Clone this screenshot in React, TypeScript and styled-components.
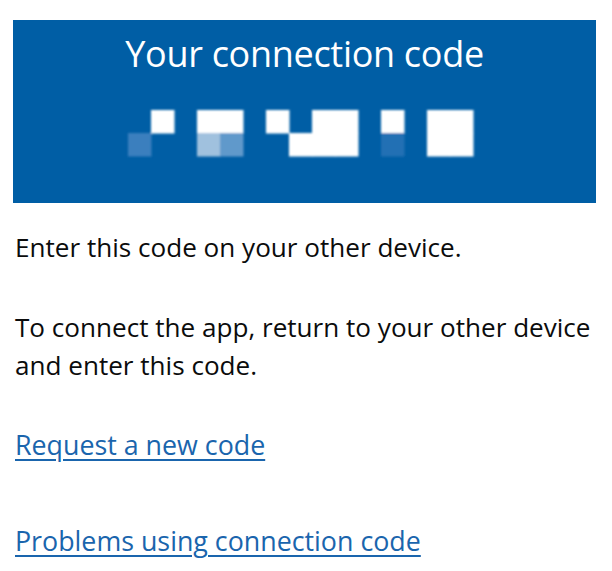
import React from 'react';
import styled, { createGlobalStyle } from 'styled-components';

type Cell = { col: number; row: number; fill: string };

// blurred-out code, as grid cells (23px squares)
const codeCells: Cell[] = [
    { col: 1, row: 0, fill: '#ffffff' },
    { col: 3, row: 0, fill: '#ffffff' },
    { col: 4, row: 0, fill: '#ffffff' },
    { col: 6, row: 0, fill: '#ffffff' },
    { col: 8, row: 0, fill: '#ffffff' },
    { col: 9, row: 0, fill: '#ffffff' },
    { col: 11, row: 0, fill: '#ffffff' },
    { col: 13, row: 0, fill: '#ffffff' },
    { col: 14, row: 0, fill: '#ffffff' },
    { col: 0, row: 1, fill: '#3a7fbe' },
    { col: 3, row: 1, fill: '#a0c1de' },
    { col: 4, row: 1, fill: '#6199cb' },
    { col: 7, row: 1, fill: '#ffffff' },
    { col: 8, row: 1, fill: '#ffffff' },
    { col: 9, row: 1, fill: '#ffffff' },
    { col: 11, row: 1, fill: '#2270b4' },
    { col: 13, row: 1, fill: '#ffffff' },
    { col: 14, row: 1, fill: '#ffffff' },
];

const CELL = 23;
const GRID_LEFT = 115;
const GRID_TOP = 10;

const App: React.FC = () => {
    return (
        <>
            <GlobalStyle />
            <SPage>
                <SPanel>
                    <SPanelTitle>Your connection code</SPanelTitle>
                    <SCode viewBox="0 0 583 66" aria-label="Connection code">
                        <defs>
                            <filter id="soft" x="-10%" y="-20%" width="120%" height="140%">
                                <feGaussianBlur stdDeviation="1.3" />
                            </filter>
                        </defs>
                        <g filter="url(#soft)">
                            {codeCells.map(c => (
                                <rect
                                    key={`${c.col}-${c.row}`}
                                    x={GRID_LEFT + c.col * CELL}
                                    y={GRID_TOP + c.row * CELL}
                                    width={CELL + 0.5}
                                    height={CELL + 0.5}
                                    fill={c.fill}
                                />
                            ))}
                        </g>
                    </SCode>
                </SPanel>
                <SBody>
                    <SParagraph>Enter this code on your other device.</SParagraph>
                    <SParagraph $gap={42}>To connect the app, return to your other device and enter this code.</SParagraph>
                    <SParagraph $gap={42}>
                        <SLink href="#">Request a new code</SLink>
                    </SParagraph>
                    <SParagraph $gap={58}>
                        <SLink href="#">Problems using connection code</SLink>
                    </SParagraph>
                </SBody>
            </SPage>
        </>
    );
};

export default App;

const GlobalStyle = createGlobalStyle`
    body {
        margin: 0;
        background: #ffffff;
        font-family: "Open Sans", "Liberation Sans", sans-serif;
        color: #0b0c0c;
    }
`;

const SPage = styled.div`
    padding: 20px 0 20px 13px;
`;

const SPanel = styled.section`
    display: flex;
    flex-direction: column;
    align-items: center;
    width: 583px;
    background-color: #005ea5;
    color: #ffffff;
    padding: 12px 0 37px;
`;

const SPanelTitle = styled.h1`
    margin: 0;
    font-size: 36px;
    line-height: 44px;
    font-weight: 400;
    letter-spacing: -0.3px;
`;

const SCode = styled.svg`
    display: block;
    width: 583px;
    height: 66px;
    margin-top: 24px;
`;

const SBody = styled.div`
    display: flex;
    flex-direction: column;
    padding-top: 25px;
    padding-left: 2px;
`;

const SParagraph = styled.p<{ $gap?: number }>`
    margin: ${p => p.$gap ?? 0}px 0 0;
    font-size: 26.1px;
    line-height: 38px;
`;

const SLink = styled.a`
    font-size: 26.8px;
    color: #1a65ad;
    text-decoration: underline;
    text-decoration-thickness: 1.5px;
    text-underline-offset: 4px;
`;
